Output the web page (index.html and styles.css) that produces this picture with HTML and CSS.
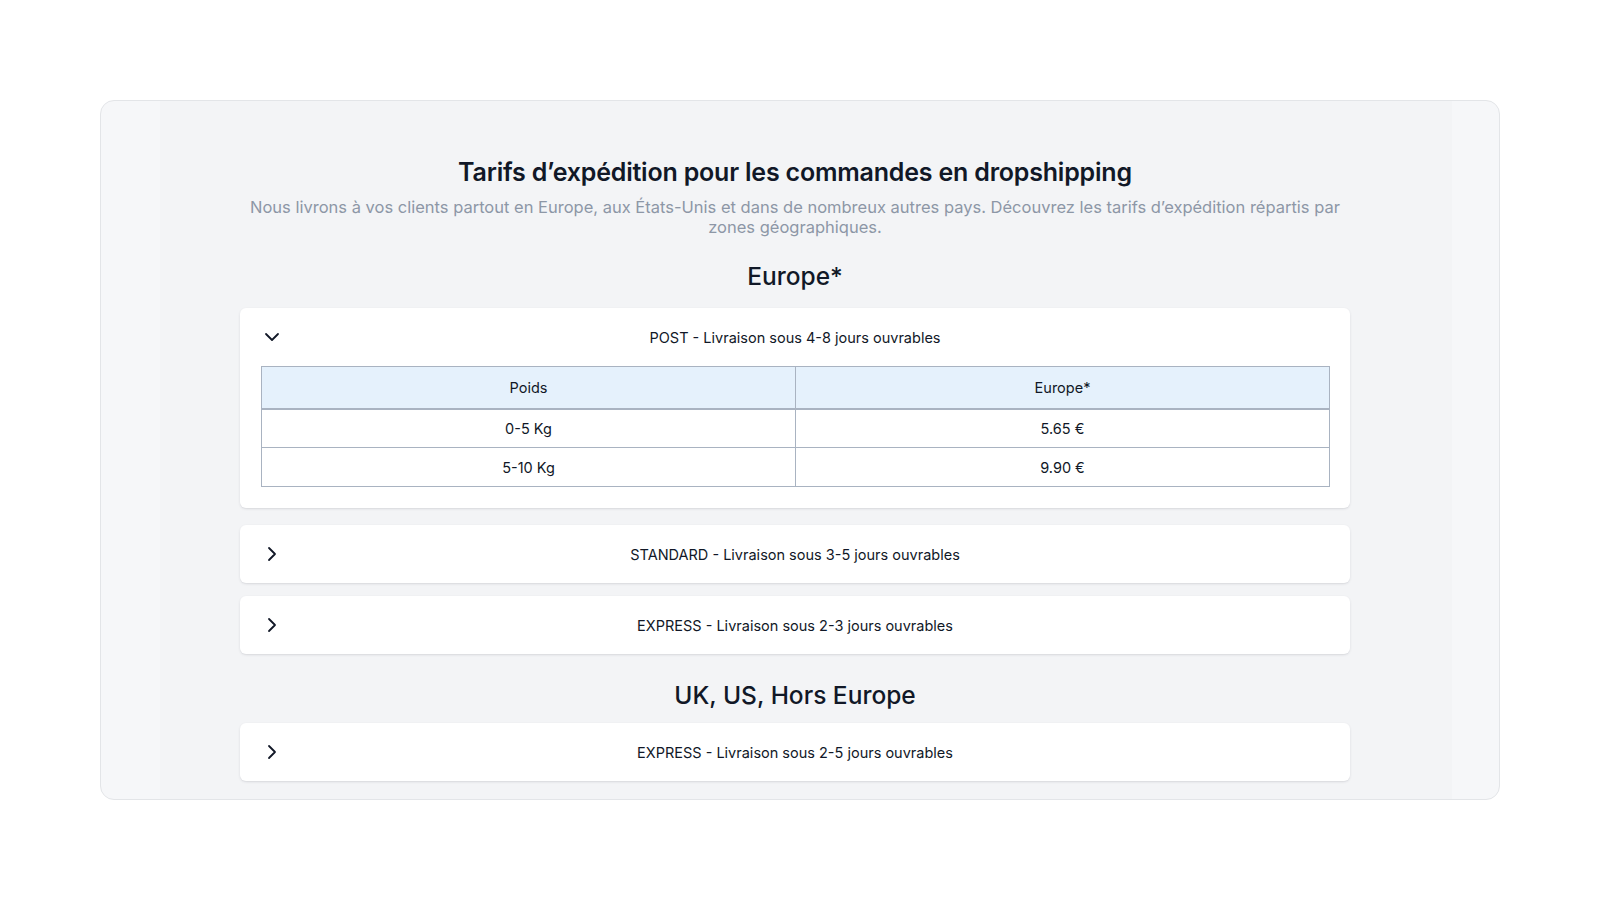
FILE: index.html
```html
<!DOCTYPE html>
<html lang="fr">
<head>
<meta charset="utf-8">
<title>Tarifs d’expédition</title>
<link rel="stylesheet" href="styles.css">
</head>
<body>
<div class="page">
  <section class="panel">
    <div class="panel-inner">
      <div class="content">
        <h1 class="title">Tarifs d’expédition pour les commandes en dropshipping</h1>
        <p class="subtitle">Nous livrons à vos clients partout en Europe, aux États-Unis et dans de nombreux autres pays. Découvrez les tarifs d’expédition répartis par zones géographiques.</p>

        <h2 class="zone">Europe*</h2>

        <div class="acc acc-open">
          <div class="acc-head">
            <svg class="chev" viewBox="0 0 24 24" width="24" height="24"><path d="M6 9l6 6 6-6" fill="none" stroke="#111827" stroke-width="1.8" stroke-linecap="round" stroke-linejoin="round"/></svg>
            <span class="acc-title">POST - Livraison sous 4-8 jours ouvrables</span>
            <span class="spacer"></span>
          </div>
          <div class="acc-body">
            <table class="rates">
              <thead>
                <tr><th>Poids</th><th>Europe*</th></tr>
              </thead>
              <tbody>
                <tr><td>0-5 Kg</td><td>5.65 €</td></tr>
                <tr><td>5-10 Kg</td><td>9.90 €</td></tr>
              </tbody>
            </table>
          </div>
        </div>

        <div class="acc acc-first-closed">
          <div class="acc-head">
            <svg class="chev" viewBox="0 0 24 24" width="24" height="24"><path d="M9 6l6 6-6 6" fill="none" stroke="#111827" stroke-width="1.8" stroke-linecap="round" stroke-linejoin="round"/></svg>
            <span class="acc-title">STANDARD - Livraison sous 3-5 jours ouvrables</span>
            <span class="spacer"></span>
          </div>
        </div>

        <div class="acc">
          <div class="acc-head">
            <svg class="chev" viewBox="0 0 24 24" width="24" height="24"><path d="M9 6l6 6-6 6" fill="none" stroke="#111827" stroke-width="1.8" stroke-linecap="round" stroke-linejoin="round"/></svg>
            <span class="acc-title">EXPRESS - Livraison sous 2-3 jours ouvrables</span>
            <span class="spacer"></span>
          </div>
        </div>

        <h2 class="zone zone-2">UK, US, Hors Europe</h2>

        <div class="acc">
          <div class="acc-head">
            <svg class="chev" viewBox="0 0 24 24" width="24" height="24"><path d="M9 6l6 6-6 6" fill="none" stroke="#111827" stroke-width="1.8" stroke-linecap="round" stroke-linejoin="round"/></svg>
            <span class="acc-title">EXPRESS - Livraison sous 2-5 jours ouvrables</span>
            <span class="spacer"></span>
          </div>
        </div>
      </div>
    </div>
  </section>
</div>
</body>
</html>
```

FILE: styles.css
```css
* { box-sizing: border-box; }
html, body { margin: 0; padding: 0; background: #ffffff; }
body {
  font-family: Inter, "Noto Sans", "Liberation Sans", sans-serif;
  color: #111827;
}
.page {
  padding: 100px 100px 100px 100px;
}
.panel {
  background: #f6f7f9;
  border: 1px solid #e3e5e8;
  border-radius: 14px;
  height: 700px;
  overflow: hidden;
  padding: 0 47px 0 59px;
}
.panel-inner {
  background: #f3f4f6;
  height: 100%;
  padding: 0 102px 0 80px;
}
.content {
  padding-top: 54px;
}
.title {
  margin: 0;
  text-align: center;
  font-size: 25px;
  line-height: 34px;
  font-weight: 600;
  color: #111827;
  letter-spacing: -0.2px;
}
.subtitle {
  margin: 8px 0 0;
  text-align: center;
  font-size: 16.5px;
  line-height: 20px;
  color: #8d97a6;
}
.zone {
  margin: 23px 0 0;
  text-align: center;
  font-size: 24.5px;
  line-height: 32px;
  font-weight: 500;
  color: #111827;
}
.zone-2 {
  margin-top: 25px;
}
.acc {
  background: #ffffff;
  border-radius: 6px;
  box-shadow: 0 1px 3px rgba(17, 24, 39, 0.09), 0 1px 1px rgba(17, 24, 39, 0.04);
  margin-top: 13px;
}
.acc-open { margin-top: 16px; }
.acc-first-closed { margin-top: 17px; }
.zone-2 + .acc { margin-top: 12px; }
.acc-head {
  display: grid;
  grid-template-columns: 24px 1fr 24px;
  align-items: center;
  height: 58px;
  padding: 0 20px;
}
.chev { display: block; }
.acc-title {
  text-align: center;
  font-size: 14.5px;
  color: #111827;
}
.acc-body {
  padding: 0 20px 21px 21px;
}
.rates {
  width: 100%;
  border-collapse: collapse;
  table-layout: fixed;
  font-size: 14.5px;
  color: #111827;
}
.rates th, .rates td {
  border: 1px solid #a9b3c1;
  text-align: center;
  font-weight: 400;
}
.rates th {
  background: #e5f1fc;
  height: 42px;
  border-bottom-width: 2px;
}
.rates td {
  height: 39px;
}
```
